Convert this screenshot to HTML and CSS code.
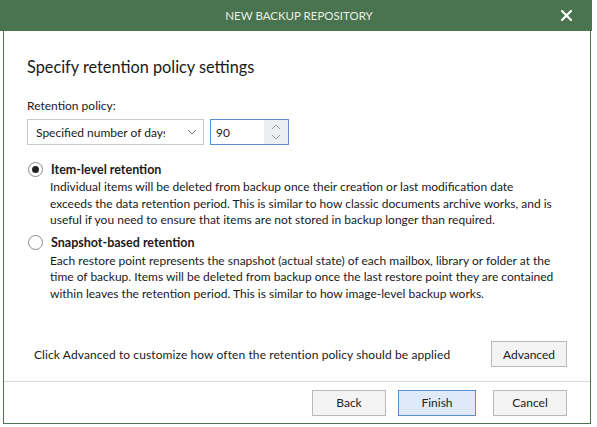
FILE: index.html
```html
<!DOCTYPE html>
<html>
<head>
<meta charset="utf-8">
<link rel="stylesheet" href="styles.css">
</head>
<body>
<div class="window">
  <div class="titlebar">
    <span class="title">NEW BACKUP REPOSITORY</span>
    <span class="close">
      <svg width="11" height="11" viewBox="0 0 11 11"><path d="M1 1 L10 10 M10 1 L1 10" stroke="#fff" stroke-width="2.2" stroke-linecap="square"/></svg>
    </span>
  </div>
  <div class="frame">
    <div class="content">
      <h1 class="heading">Specify retention policy settings</h1>
      <div class="field-label">Retention policy:</div>
      <div class="controls">
        <div class="select">
          <span class="select-text">Specified number of days</span>
          <span class="chev">
            <svg width="10" height="6" viewBox="0 0 10 6"><path d="M1 1 L5 5 L9 1" fill="none" stroke="#777" stroke-width="1"/></svg>
          </span>
        </div>
        <div class="number">
          <span class="number-text">90</span>
          <span class="spin">
            <svg width="10" height="6" viewBox="0 0 10 6"><path d="M1 5 L5 1 L9 5" fill="none" stroke="#999" stroke-width="1"/></svg>
            <svg width="10" height="6" viewBox="0 0 10 6"><path d="M1 1 L5 5 L9 1" fill="none" stroke="#999" stroke-width="1"/></svg>
          </span>
        </div>
      </div>
      <div class="option">
        <div class="option-head">
          <span class="radio checked"><span class="dot"></span></span>
          <span class="option-title">Item-level retention</span>
        </div>
        <p class="option-desc">Individual items will be deleted from backup once their creation or last modification date<br>exceeds the data retention period. This is similar to how classic documents archive works, and is<br>useful if you need to ensure that items are not stored in backup longer than required.</p>
      </div>
      <div class="option">
        <div class="option-head">
          <span class="radio"></span>
          <span class="option-title">Snapshot-based retention</span>
        </div>
        <p class="option-desc">Each restore point represents the snapshot (actual state) of each mailbox, library or folder at the<br>time of backup. Items will be deleted from backup once the last restore point they are contained<br>within leaves the retention period. This is similar to how image-level backup works.</p>
      </div>
      <div class="advanced-row">
        <span class="advanced-text">Click Advanced to customize how often the retention policy should be applied</span>
        <button class="btn">Advanced</button>
      </div>
    </div>
    <div class="footer">
      <button class="btn">Back</button>
      <button class="btn primary">Finish</button>
      <button class="btn cancel">Cancel</button>
    </div>
  </div>
</div>
</body>
</html>
```
FILE: styles.css
```css
* { box-sizing: border-box; }
html, body { margin: 0; padding: 0; background: #fff; }
body {
  font-family: Lato, "Noto Sans", sans-serif;
  font-size: 12px;
  color: #1a1a1a;
  width: 597px;
  height: 427px;
  overflow: hidden;
}
.window { width: 592px; }
.titlebar {
  height: 31px;
  background: #4a7350;
  display: flex;
  align-items: center;
  justify-content: center;
  position: relative;
}
.title {
  color: #e6eee6;
  font-size: 11.5px;
  margin-left: 6px;
}
.close {
  position: absolute;
  right: 20px;
  top: 10px;
  display: flex;
}
.frame {
  margin-left: 3px;
  width: 588px;
  height: 393px;
  border: 1px solid #4a7350;
  border-top: none;
  display: flex;
  flex-direction: column;
}
.content {
  padding: 25px 20px 0 23px;
  flex: 1;
  display: flex;
  flex-direction: column;
}
.heading {
  margin: 0;
  font-weight: normal;
  font-size: 16.3px;
  line-height: 22px;
  color: #1a1a1a;
}
.field-label {
  margin-top: 20px;
  line-height: 16px;
}
.controls {
  margin-top: 5px;
  display: flex;
  gap: 6px;
}
.select {
  width: 177px;
  height: 26px;
  border: 1px solid #c8c8c8;
  display: flex;
  align-items: center;
  padding-left: 8px;
  padding-right: 6px;
}
.select-text {
  white-space: nowrap;
  overflow: hidden;
  width: 131px;
}
.chev { display: flex; margin-left: 22px; }
.number {
  width: 79px;
  height: 26px;
  border: 1px solid #5a8fd4;
  display: flex;
  align-items: stretch;
}
.number-text {
  flex: 1;
  padding-left: 5px;
  display: flex;
  align-items: center;
}
.spin {
  width: 24px;
  background: #eceeef;
  display: flex;
  flex-direction: column;
  align-items: center;
  justify-content: center;
  gap: 4px;
}
.option { margin-top: 15px; }
.option + .option { margin-top: 5px; }
.option-head {
  display: flex;
  align-items: center;
  gap: 8px;
  height: 18px;
}
.radio {
  width: 15px;
  height: 15px;
  border-radius: 50%;
  border: 1px solid #8a8a8a;
  display: flex;
  align-items: center;
  justify-content: center;
  margin-left: 1px;
}
.radio .dot {
  width: 7px;
  height: 7px;
  border-radius: 50%;
  background: #222;
}
.option-title { font-weight: bold; font-size: 12.5px; }
.option-desc {
  margin: 1px 0 0 23px;
  line-height: 16.5px;
  white-space: nowrap;
}
.advanced-row {
  margin-top: auto;
  margin-bottom: 14px;
  display: flex;
  align-items: center;
  justify-content: space-between;
  padding-left: 7px;
  padding-right: 3px;
}
.advanced-text { letter-spacing: 0.1px; }
.btn {
  font-family: inherit;
  font-size: 12px;
  color: #222;
  background: #f3f3f3;
  border: 1px solid #b9b9b9;
  width: 76px;
  height: 26px;
  padding: 0;
}
.footer {
  border-top: 1px solid #d8d8d8;
  height: 42px;
  display: flex;
  align-items: center;
  justify-content: flex-end;
  gap: 12px;
  padding-right: 23px;
}
.footer .btn { width: 74px; }
.footer .btn.primary {
  width: 78px;
  background: #deeaf7;
  border-color: #5a8fd4;
}
.footer .btn.cancel { margin-left: 5px; }
```
